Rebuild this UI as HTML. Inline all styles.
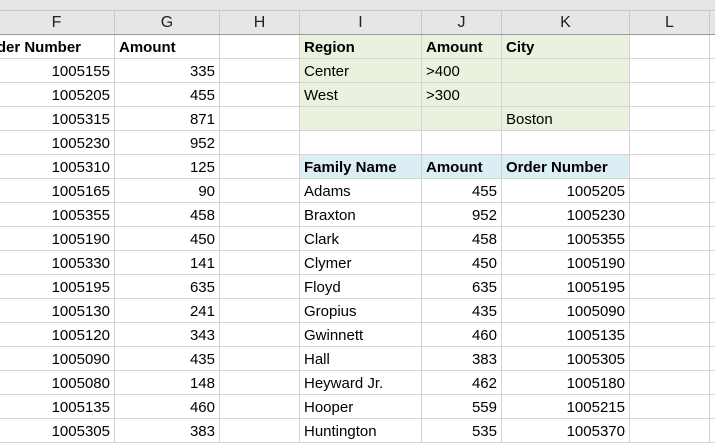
<!DOCTYPE html><html><head><style>
body{margin:0;width:715px;height:442px;overflow:hidden;background:#fff;font-family:"Liberation Sans",sans-serif;font-size:15px;color:#000}
.top{position:absolute;left:0;top:0;width:715px;height:11px;background:#e6e6e6}
table{position:absolute;left:-2px;top:10px;border-collapse:collapse;table-layout:fixed;width:731px}
td{border:1px solid #d4d4d4;height:21px;padding:2px 4px 0 4px;white-space:nowrap;overflow:hidden;line-height:21px}
tr.h td{background:#e6e6e6;text-align:center;color:#222;border-color:#c8c8c8;border-bottom:1px solid #999;font-size:16px;height:23px;line-height:23px;padding:0}
.r{text-align:right}
.b{font-weight:bold}
.g{background:#ebf1df}
.bl{background:#daeef3}
</style></head><body><div class="top"></div>
<table>
<colgroup><col style="width:116px"><col style="width:105px"><col style="width:80px"><col style="width:122px"><col style="width:80px"><col style="width:128px"><col style="width:80px"><col style="width:20px"></colgroup>
<tr class="h"><td>F</td><td>G</td><td>H</td><td>I</td><td>J</td><td>K</td><td>L</td><td></td></tr>
<tr><td class="b" style="text-indent:-12px">rder Number</td><td class="b">Amount</td><td></td><td class="g b">Region</td><td class="g b">Amount</td><td class="g b">City</td><td></td><td></td></tr>
<tr><td class="r">1005155</td><td class="r">335</td><td></td><td class="g">Center</td><td class="g">&gt;400</td><td class="g"></td><td></td><td></td></tr>
<tr><td class="r">1005205</td><td class="r">455</td><td></td><td class="g">West</td><td class="g">&gt;300</td><td class="g"></td><td></td><td></td></tr>
<tr><td class="r">1005315</td><td class="r">871</td><td></td><td class="g"></td><td class="g"></td><td class="g">Boston</td><td></td><td></td></tr>
<tr><td class="r">1005230</td><td class="r">952</td><td></td><td></td><td></td><td></td><td></td><td></td></tr>
<tr><td class="r">1005310</td><td class="r">125</td><td></td><td class="bl b">Family Name</td><td class="bl b">Amount</td><td class="bl b">Order Number</td><td></td><td></td></tr>
<tr><td class="r">1005165</td><td class="r">90</td><td></td><td>Adams</td><td class="r">455</td><td class="r">1005205</td><td></td><td></td></tr>
<tr><td class="r">1005355</td><td class="r">458</td><td></td><td>Braxton</td><td class="r">952</td><td class="r">1005230</td><td></td><td></td></tr>
<tr><td class="r">1005190</td><td class="r">450</td><td></td><td>Clark</td><td class="r">458</td><td class="r">1005355</td><td></td><td></td></tr>
<tr><td class="r">1005330</td><td class="r">141</td><td></td><td>Clymer</td><td class="r">450</td><td class="r">1005190</td><td></td><td></td></tr>
<tr><td class="r">1005195</td><td class="r">635</td><td></td><td>Floyd</td><td class="r">635</td><td class="r">1005195</td><td></td><td></td></tr>
<tr><td class="r">1005130</td><td class="r">241</td><td></td><td>Gropius</td><td class="r">435</td><td class="r">1005090</td><td></td><td></td></tr>
<tr><td class="r">1005120</td><td class="r">343</td><td></td><td>Gwinnett</td><td class="r">460</td><td class="r">1005135</td><td></td><td></td></tr>
<tr><td class="r">1005090</td><td class="r">435</td><td></td><td>Hall</td><td class="r">383</td><td class="r">1005305</td><td></td><td></td></tr>
<tr><td class="r">1005080</td><td class="r">148</td><td></td><td>Heyward Jr.</td><td class="r">462</td><td class="r">1005180</td><td></td><td></td></tr>
<tr><td class="r">1005135</td><td class="r">460</td><td></td><td>Hooper</td><td class="r">559</td><td class="r">1005215</td><td></td><td></td></tr>
<tr><td class="r">1005305</td><td class="r">383</td><td></td><td>Huntington</td><td class="r">535</td><td class="r">1005370</td><td></td><td></td></tr>
</table></body></html>
